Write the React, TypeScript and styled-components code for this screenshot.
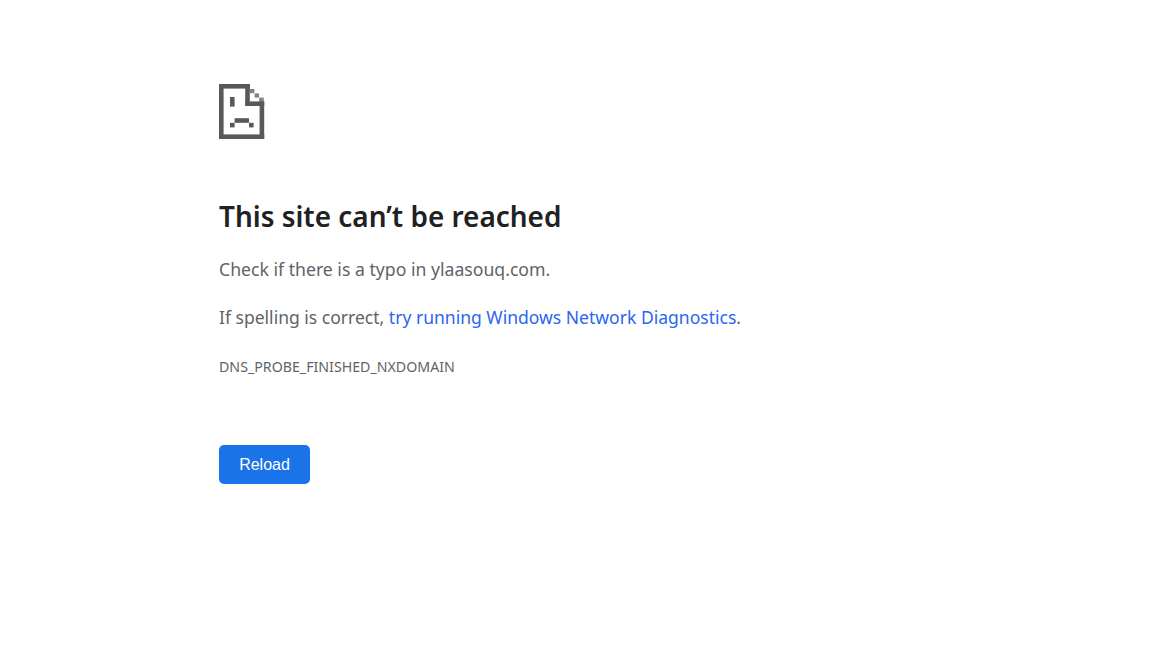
import React from "react";
import styled, { createGlobalStyle } from "styled-components";

const Global = createGlobalStyle`
  html, body { margin: 0; padding: 0; background: #fff; }
  body { font-family: "Noto Sans", "Open Sans", "Liberation Sans", sans-serif; }
`;

const Page = styled.main`
  width: 1151px;
  height: 650px;
  box-sizing: border-box;
  padding: 84px 0 0 219px;
  overflow: hidden;
`;

const Icon = styled.svg`
  display: block;
  width: 46px;
  height: 55px;
  fill: #58595b;
`;

const Heading = styled.h1`
  margin: 57px 0 0;
  font-size: 27.95px;
  line-height: 40px;
  font-weight: 600;
  color: #202124;
  white-space: nowrap;
`;

const Message = styled.p`
  margin: 21px 0 0;
  font-size: 17.65px;
  line-height: 24px;
  color: #5f6368;
  white-space: nowrap;
`;

const SecondMessage = styled(Message)`
  margin-top: 24px;
  font-size: 17.55px;
`;

const DiagLink = styled.a`
  color: #2a66f0;
  text-decoration: none;
`;

const Code = styled.div`
  margin-top: 28px;
  font-size: 14.2px;
  line-height: 20px;
  color: #5f6368;
  white-space: nowrap;
`;

const ReloadButton = styled.button`
  display: block;
  margin-top: 68px;
  width: 91px;
  height: 39px;
  padding: 0;
  border: 0;
  border-radius: 5px;
  background: #1a73e8;
  color: #fff;
  font-family: "Liberation Sans", Arial, sans-serif;
  font-size: 16px;
`;

const SadPage = () => (
  <Icon viewBox="0 0 46 55" aria-hidden="true">
    <rect x="0" y="0" width="4.6" height="55" />
    <rect x="0" y="0" width="31" height="4.6" />
    <rect x="26.2" y="0" width="4.6" height="22" />
    <rect x="26.2" y="17.4" width="19" height="4.6" />
    <rect x="31" y="5" width="4.4" height="4.2" fillOpacity="0.75" />
    <rect x="35.6" y="9.4" width="4.4" height="4.2" fillOpacity="0.75" />
    <rect x="40.2" y="13.6" width="4.6" height="4" fillOpacity="0.75" />
    <rect x="40.6" y="17.4" width="4.6" height="37.6" />
    <rect x="0" y="50.4" width="45.2" height="4.6" />
    <rect x="11" y="13" width="4.6" height="9.6" />
    <rect x="15.6" y="34.2" width="14.4" height="4.6" />
    <rect x="11" y="38.8" width="4.6" height="4.6" />
    <rect x="30" y="38.8" width="4.6" height="4.6" />
  </Icon>
);

export default function App() {
  return (
    <>
      <Global />
      <Page>
        <SadPage />
        <Heading>This site can’t be reached</Heading>
        <Message>Check if there is a typo in ylaasouq.com.</Message>
        <SecondMessage>
          If spelling is correct, <DiagLink href="#">try running Windows Network Diagnostics</DiagLink>.
        </SecondMessage>
        <Code>DNS_PROBE_FINISHED_NXDOMAIN</Code>
        <ReloadButton>Reload</ReloadButton>
      </Page>
    </>
  );
}
